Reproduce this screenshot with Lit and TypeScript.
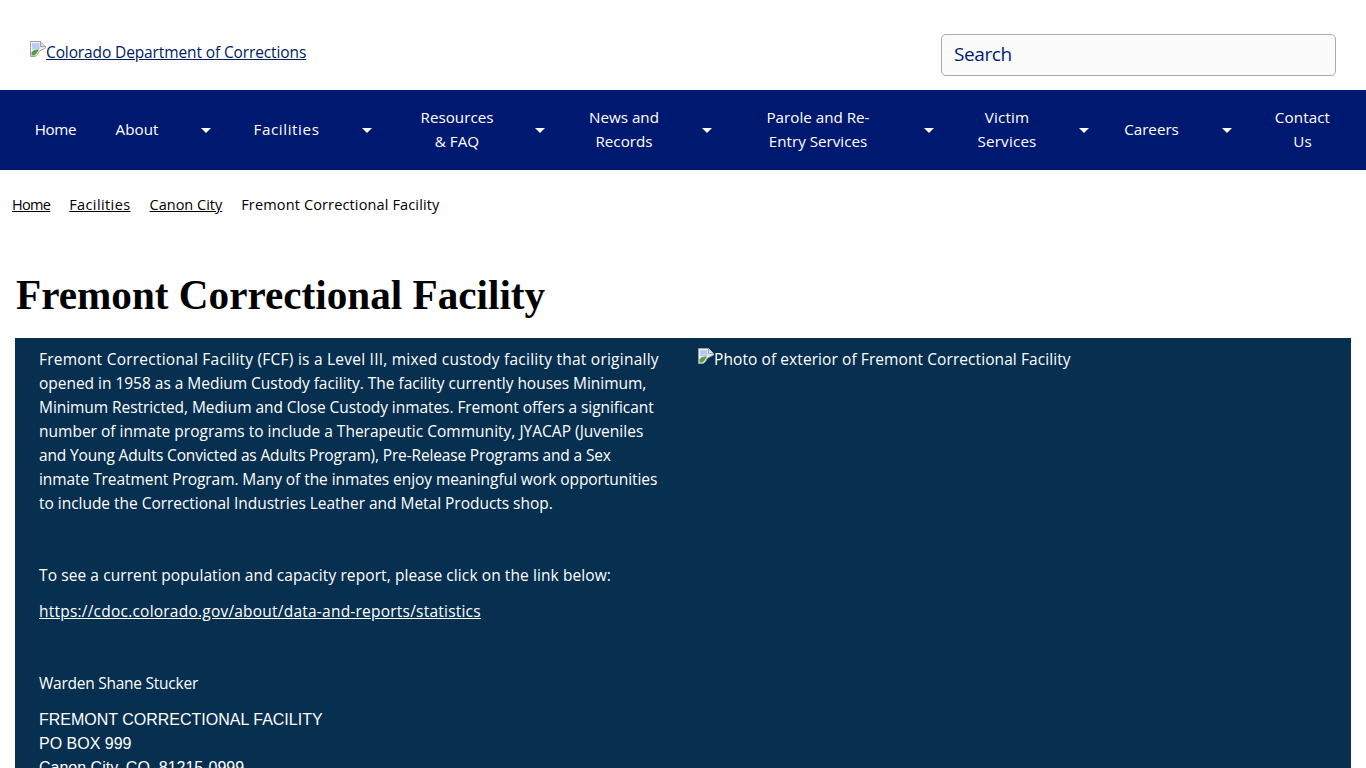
import { LitElement, css, html } from 'lit'
import { customElement } from 'lit/decorators.js'

const NAV = [
  { lines: ['Home'], w: 81, caret: 0, ls: -0.3 },
  { lines: ['About'], w: 82, caret: 56, ls: 0 },
  { lines: ['Facilities'], w: 105, caret: 56, ls: 0.6 },
  { lines: ['Resources', '& FAQ'], w: 124, caret: 42, ls: 0 },
  { lines: ['News and', 'Records'], w: 126, caret: 40, ls: 0 },
  { lines: ['Parole and Re-', 'Entry Services'], w: 182, caret: 40, ls: 0 },
  { lines: ['Victim', 'Services'], w: 116, caret: 38, ls: 0.2 },
  { lines: ['Careers'], w: 97, caret: 54, ls: 0 },
  { lines: ['Contact', 'Us'], w: 97, caret: 0, ls: 0.1 },
]

// letter spacing per line keeps the line ends where the reference has them
const INTRO: [string, number][] = [
  ['Fremont Correctional Facility (FCF) is a Level III, mixed custody facility that originally', 0.233],
  ['opened in 1958 as a Medium Custody facility. The facility currently houses Minimum,', -0.024],
  ['Minimum Restricted, Medium and Close Custody inmates. Fremont offers a significant', -0.06],
  ['number of inmate programs to include a Therapeutic Community, JYACAP (Juveniles', 0.012],
  ['and Young Adults Convicted as Adults Program), Pre-Release Programs and a Sex', -0.156],
  ['inmate Treatment Program. Many of the inmates enjoy meaningful work opportunities', -0.073],
  ['to include the Correctional Industries Leather and Metal Products shop.', -0.03],
]

// browser's broken image glyph, the lower right corner is torn off
const brokenImage = html`<svg class="broken" width="16" height="16" viewBox="0 0 16 16"><path d="M0.5 15.5V0.5H10.5L15.5 5.5V7L9.5 10L7.5 13.5L5 15.5Z" fill="#f4f4f4" stroke="#a0a0a0" /><path d="M10.5 0.5V5.5H15.5" fill="#e0e0e0" stroke="#a0a0a0" /><path d="M2 2H9.5V6.5H14L8 8L2 8.5Z" fill="#b7cdf4" /><path d="M1.5 14.5V11.5C3 9 5.5 8 9 8.5L6.5 12.5L4.5 14.5Z" fill="#4f9f41" /></svg>`

@customElement('app-root')
export class AppRoot extends LitElement {
  render() {
    return html`
      <header class="top">
        <a class="logo" href="#">${brokenImage}Colorado Department of Corrections</a>
        <input class="search" type="text" placeholder="Search" />
      </header>
      <nav class="nav">
        ${NAV.map(
          (item) => html`
            <a class="nav-link" href="#" style="width:${item.w}px;letter-spacing:${item.ls}px">
              ${item.lines.map((l) => html`<span>${l}</span>`)}
            </a>
            ${item.caret
              ? html`<span class="caret-box" style="width:${item.caret}px"><i class="caret"></i></span>`
              : ''}
          `,
        )}
      </nav>
      <div class="crumbs">
        <a class="c-home" href="#">Home</a>
        <a class="c-fac" href="#">Facilities</a>
        <a href="#">Canon City</a>
        <span class="c-cur">Fremont Correctional Facility</span>
      </div>
      <h1>Fremont Correctional Facility</h1>
      <section class="panel">
        <div class="col text">
          <p>
            ${INTRO.map(([t, ls]) => html`<span class="line" style="letter-spacing:${ls}px">${t}</span>`)}
          </p>
          <p class="gap report">To see a current population and capacity report, please click on the link below:</p>
          <p><a class="stats" href="#">https://cdoc.colorado.gov/about/data-and-reports/statistics</a></p>
          <p class="gap warden">Warden Shane Stucker</p>
          <p class="address">
            FREMONT CORRECTIONAL FACILITY<br />
            PO BOX 999<br />
            Canon City, CO&nbsp; 81215-0999
          </p>
        </div>
        <div class="col photo">${brokenImage}Photo of exterior of Fremont Correctional Facility</div>
      </section>
    `
  }

  static styles = css`
    :host {
      display: block;
      font-family: 'Open Sans', Lato, sans-serif;
      font-size: 15.5px;
      line-height: 24px;
      color: #000;
      background: #fff;
    }

    .top {
      height: 90px;
      box-sizing: border-box;
      display: flex;
      justify-content: space-between;
      padding: 34px 30px 0;
    }

    .logo {
      color: #002060;
      height: 24px;
      margin-top: 6px;
      letter-spacing: -0.12px;
    }

    .broken {
      vertical-align: 1px;
    }

    .search {
      box-sizing: border-box;
      width: 395px;
      height: 42px;
      padding: 0 12px 2px;
      border: 1px solid #aaa;
      border-radius: 5px;
      background: #fbfbfb;
      font: 500 19px 'Open Sans', Lato, sans-serif;
      letter-spacing: -0.4px;
      color: #001970;
    }

    .search::placeholder {
      color: #001970;
      opacity: 1;
    }

    .nav {
      height: 80px;
      box-sizing: border-box;
      padding: 0 15px;
      display: flex;
      align-items: center;
      background: #001970;
      font-size: 15.2px;
    }

    .nav-link {
      flex: none;
      display: flex;
      flex-direction: column;
      align-items: center;
      margin-top: -2px;
      color: #fff;
      text-decoration: none;
    }

    .caret-box {
      flex: none;
      display: flex;
      justify-content: center;
    }

    .caret {
      width: 0;
      height: 0;
      border: 5px solid transparent;
      border-top-color: #fff;
      border-bottom: 0;
    }

    .crumbs {
      display: flex;
      gap: 19px;
      padding: 23px 12px 0;
      height: 47px;
      font-size: 14.5px;
    }

    .crumbs a {
      color: #000;
    }

    .crumbs .c-home {
      letter-spacing: -0.7px;
    }

    .crumbs .c-fac {
      letter-spacing: 0.4px;
    }

    .c-cur {
      letter-spacing: 0.14px;
    }

    h1 {
      margin: 0;
      padding: 32px 16px 0;
      height: 98px;
      box-sizing: border-box;
      font: bold 41.2px/46px 'Liberation Serif', serif;
    }

    .panel {
      margin: 0 15px;
      display: grid;
      grid-template-columns: 1fr 1fr;
      background: #062f50;
      color: #fff;
    }

    .text {
      padding: 9px 0 24px 24px;
    }

    .photo {
      padding: 9px 0 0 15px;
      letter-spacing: 0.08px;
    }

    p {
      margin: 0 0 12px;
    }

    .line {
      display: block;
      white-space: nowrap;
    }

    .gap {
      margin-top: 48px;
    }

    .report {
      letter-spacing: 0.09px;
    }

    .warden {
      letter-spacing: -0.25px;
    }

    .text a {
      color: #fff;
      letter-spacing: 0.22px;
    }

    .address {
      margin-top: 13px;
      font-family: 'Liberation Sans', sans-serif;
      font-size: 16px;
    }
  `
}

declare global {
  interface HTMLElementTagNameMap {
    'app-root': AppRoot
  }
}
